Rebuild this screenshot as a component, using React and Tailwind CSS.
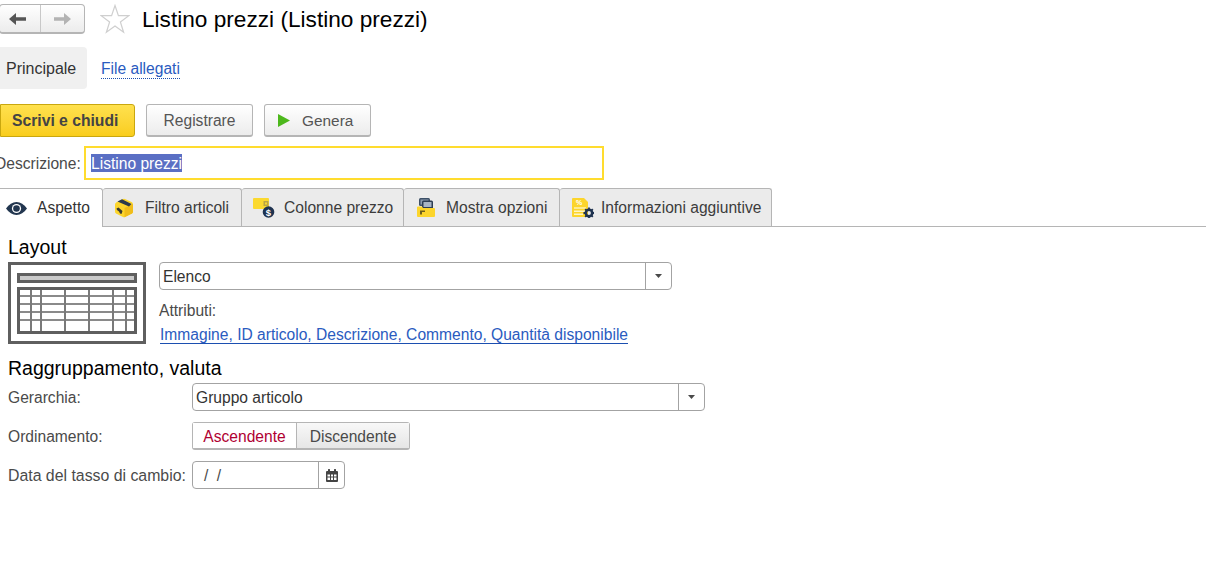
const font = { fontFamily: '"Liberation Sans", Arial, sans-serif' }

function Caret() {
  return (
    <svg width="7" height="4" viewBox="0 0 7 4">
      <path d="M0 0h7L3.500 4z" fill="#4a4a4a" />
    </svg>
  )
}

function SelectBox({ value, className }) {
  return (
    <div className={`flex h-[28px] items-stretch rounded-[4px] border border-[#a3a3a3] bg-white ${className}`}>
      <div className="flex-1 pl-[3px] text-[15.6px] leading-[28px] text-[#333333]">{value}</div>
      <div className="flex w-[26px] items-center justify-center border-l border-[#a3a3a3]">
        <Caret />
      </div>
    </div>
  )
}

function NavArrow({ color, flip }) {
  return (
    <svg width="17" height="12" viewBox="0 0 17 12" className={flip ? 'rotate-180' : ''}>
      <path d="M0 6l7-6v4.200h10v3.600H7V12z" fill={color} />
    </svg>
  )
}

function Star() {
  return (
    <svg width="30" height="30" viewBox="0 0 30 30" className="ml-[15px] shrink-0">
      <path d="M15 1.500l3.400 10.200h10.400l-8.400 6.200 3.200 10.300L15 21.900l-8.600 6.300 3.200-10.300-8.400-6.200h10.400z" fill="#ffffff" stroke="#cfcfcf" strokeWidth="1.200" />
    </svg>
  )
}

function EyeIcon() {
  return (
    <svg width="21" height="13" viewBox="0 0 21 13">
      <path d="M0 6.500C3 2.200 6.500 0 10.500 0S18 2.200 21 6.500C18 10.800 14.500 13 10.500 13S3 10.800 0 6.500z" fill="#22364f" />
      <circle cx="10.500" cy="6.500" r="4.600" fill="#ffffff" />
      <circle cx="10.500" cy="6.500" r="3.300" fill="#22364f" />
    </svg>
  )
}

function BoxIcon() {
  return (
    <svg width="20" height="20" viewBox="0 0 20 20">
      <path d="M1 6.500Q1 5 2.500 4.300L9 1q1-.5 2 0l7 3.300Q19 5 19 6.500v7q0 1.300-1 2L11 19q-1 .5-2 0l-7-3.500Q1 14.800 1 13.500z" fill="#fcd52c" />
      <path d="M10.500 10L19 6v7.500q0 1.300-1 2L11 19l-.5.200z" fill="#f0bd1a" />
      <path d="M3.500 3.500L8 1.300l9.500 4.700-2.500 2.500z" fill="#2b3a4c" />
      <path d="M2.500 10.500l2-1 4 3.500-1 3-1.500-.5-1-2-2-1.500z" fill="#3a3a30" />
    </svg>
  )
}

function PriceIcon() {
  return (
    <svg width="22" height="20" viewBox="0 0 22 20">
      <rect x="0" y="0" width="16" height="11" rx="1" fill="#fbd92f" />
      <rect x="10.500" y="3" width="5" height="5" fill="#b9a545" />
      <rect x="12" y="4.500" width="2" height="2" fill="#fbd92f" />
      <circle cx="15.500" cy="14" r="5.800" fill="#1f3350" />
      <text x="15.500" y="17.500" textAnchor="middle" fontSize="9.500" fontWeight="700" fill="#ffffff" fontFamily="Liberation Sans">$</text>
    </svg>
  )
}

function OptionsIcon() {
  return (
    <svg width="18" height="19" viewBox="0 0 18 19">
      <rect x="2" y="0" width="11" height="8" rx="1.500" fill="#3c4f66" />
      <rect x="3.500" y="1.500" width="8" height="5" fill="#8b9bb0" />
      <rect x="5" y="2.500" width="11" height="9" rx="1.500" fill="#2d3e55" />
      <rect x="6.500" y="4" width="8" height="5" fill="#a8b5c5" />
      <path d="M0 9.500q0-1 1-1h4l1 1.500h11q1 0 1 1v7q0 1-1 1H1q-1 0-1-1z" fill="#fcd52c" />
      <path d="M3 12.500h5v1.500H5v2.500H3z" fill="#6d5e1c" />
    </svg>
  )
}

function InfoIcon() {
  return (
    <svg width="22" height="20" viewBox="0 0 22 20">
      <path d="M1 0h11l4 4v15H1q-1 0-1-1V1q0-1 1-1z" fill="#fcd52c" />
      <rect x="2" y="9" width="12" height="2" fill="#fdeb90" />
      <rect x="2" y="12.500" width="12" height="1.500" fill="#fff6c4" />
      <rect x="2" y="15.500" width="9" height="1.500" fill="#fff6c4" />
      <text x="7" y="7" textAnchor="middle" fontSize="7" fontWeight="700" fill="#ffffff" fontFamily="Liberation Sans">%</text>
      <circle cx="17" cy="15" r="3.200" fill="none" stroke="#1f3350" strokeWidth="2.600" />
      <path d="M17 9.500v2M17 18.500v1.500M11.500 15h2M20.500 15h1.500M13.200 11.200l1.400 1.400M19.400 17.400l1.400 1.400M13.200 18.800l1.400-1.400M19.400 12.600l1.400-1.400" stroke="#1f3350" strokeWidth="1.800" />
    </svg>
  )
}

function LayoutIcon() {
  const cols = [22, 32, 56, 80, 104, 117]
  const rows = [33, 41, 49, 57]
  return (
    <svg width="138" height="82" viewBox="0 0 138 82" className="shrink-0">
      <rect x="1.500" y="1.500" width="135" height="79" fill="#ffffff" stroke="#5f5f5f" strokeWidth="3" />
      <rect x="10.500" y="12.500" width="117" height="7" fill="#c9c9c9" stroke="#5f5f5f" strokeWidth="3" />
      <rect x="10.500" y="26.500" width="117" height="44" fill="#ffffff" stroke="#5f5f5f" strokeWidth="3" />
      {rows.map((r) => (
        <rect key={r} x="12" y={r} width="114" height="2" fill="#8a8a8a" />
      ))}
      {cols.map((c) => (
        <rect key={c} x={c} y="28" width="2" height="41" fill="#7a7a7a" />
      ))}
    </svg>
  )
}

function CalendarIcon() {
  return (
    <svg width="12" height="13" viewBox="0 0 12 13">
      <path d="M1 2h10q1 0 1 1v9q0 1-1 1H1q-1 0-1-1V3q0-1 1-1z" fill="#444444" />
      <rect x="2" y="0" width="2" height="3" rx="0.500" fill="#444444" />
      <rect x="8" y="0" width="2" height="3" rx="0.500" fill="#444444" />
      <path d="M1.500 5.500h2.500v2H1.500zM5 5.500h2v2H5zM8 5.500h2.500v2H8zM1.500 8.500h2.500v2.500H1.500zM5 8.500h2v2.500H5zM8 8.500h2.500v2.500H8z" fill="#ffffff" />
    </svg>
  )
}

const tabs = [
  { label: 'Filtro articoli', icon: <BoxIcon />, width: 'w-[139px]', gap: 'gap-[11px]', pl: 'pl-[11px]' },
  { label: 'Colonne prezzo', icon: <PriceIcon />, width: 'w-[162px]', gap: 'gap-[9px]', pl: 'pl-[11px]' },
  { label: 'Mostra opzioni', icon: <OptionsIcon />, width: 'w-[156px]', gap: 'gap-[11px]', pl: 'pl-[13px]' },
  { label: 'Informazioni aggiuntive', icon: <InfoIcon />, width: 'w-[212px]', gap: 'gap-[7px]', pl: 'pl-[12px]' },
]

const grayButton = 'rounded-[3px] border border-b-2 border-[#b5b5b5] bg-gradient-to-b from-white to-[#ececec] text-[#555555]'

export default function App() {
  return (
    <div style={font} className="h-[579px] w-[1206px] overflow-hidden bg-white text-[15.6px] text-[#4a4a4a]">
      {/* title bar */}
      <header className="flex h-[47px] items-start pt-[4px]">
        <div className="ml-[-1px] flex h-[30px] w-[86px] rounded-[4px] border border-b-2 border-[#b5b5b5] bg-gradient-to-b from-white to-[#ececec]">
          <div className="flex w-[41px] items-center justify-center border-r border-[#c8c8c8] pr-[5px]">
            <NavArrow color="#555555" />
          </div>
          <div className="flex flex-1 items-center justify-center">
            <NavArrow color="#b3b3b3" flip />
          </div>
        </div>
        <Star />
        <h1 className="ml-[12px] text-[22.65px] leading-[30px] text-black">Listino prezzi (Listino prezzi)</h1>
      </header>

      {/* page switcher */}
      <nav className="flex h-[42px] items-center">
        <div className="flex h-full w-[87px] items-center rounded-r-[4px] bg-[#f0f0f0] pl-[6px] pt-[2px] text-[16px] text-[#333333]">Principale</div>
        <a className="ml-[14px] mt-[2px] border-b border-dotted border-[#1c4fb0] leading-[18px] text-[#2a5bc0]">File allegati</a>
      </nav>

      {/* command bar */}
      <div className="mt-[15px] flex h-[33px] items-stretch">
        <button className="w-[135px] rounded-r-[3px] border border-[#c9a70f] bg-gradient-to-b from-[#ffe14d] to-[#f9cd1b] pl-[11px] text-left text-[15.7px] font-bold text-[#444444]">Scrivi e chiudi</button>
        <button className={`ml-[11px] w-[107px] pt-[1px] ${grayButton}`}>Registrare</button>
        <button className={`ml-[11px] flex w-[107px] items-center pl-[13px] pt-[1px] ${grayButton}`}>
          <svg width="12" height="13" viewBox="0 0 12 13"><path d="M0 0l12 6.500L0 13z" fill="#4db81c" /></svg>
          <span className="ml-[12px] text-[15.4px]">Genera</span>
        </button>
      </div>

      {/* description */}
      <div className="mt-[9px] flex h-[34px] items-center">
        <label className="ml-[-5px] w-[89px] whitespace-nowrap pt-[2px]">Descrizione:</label>
        <div className="flex h-full w-[520px] items-center border-2 border-[#ffdc2e] pl-[5px]">
          <span className="h-[18px] bg-[#5a6fc4] leading-[19px] text-white">Listino prezzi</span>
        </div>
      </div>

      {/* tabs */}
      <div className="mt-[8px] flex h-[39px] border-b border-[#b5b5b5] text-[15.6px]">
        <div className="flex h-[39px] w-[103px] items-center gap-[10px] rounded-tr-[3px] border-r border-t border-[#b5b5b5] bg-white pl-[6px] text-[#333333]">
          <EyeIcon />
          <span>Aspetto</span>
        </div>
        {tabs.map((tab) => (
          <div key={tab.label} className={`flex items-center rounded-t-[3px] border-r border-t border-[#b5b5b5] bg-[#ebebeb] text-[#3c3c3c] ${tab.width} ${tab.gap} ${tab.pl}`}>
            {tab.icon}
            <span className="whitespace-nowrap">{tab.label}</span>
          </div>
        ))}
      </div>

      {/* layout section */}
      <section className="pl-[8px]">
        <h2 className="mt-[9px] text-[19.5px] leading-[22px] text-black">Layout</h2>
        <div className="mt-[4px] flex">
          <LayoutIcon />
          <div className="ml-[13px]">
            <SelectBox value="Elenco" className="w-[513px]" />
            <div className="mt-[12px] leading-[18px]">Attributi:</div>
            <a className="mt-[6px] ml-[1px] inline-block border-b border-[#1c4fb0] leading-[17px] text-[#2a5bc0]">Immagine, ID articolo, Descrizione, Commento, Quantità disponibile</a>
          </div>
        </div>

        <h2 className="mt-[11px] text-[19.5px] leading-[22px] text-black">Raggruppamento, valuta</h2>
        <div className="mt-[4px] flex items-center">
          <span className="w-[184px]">Gerarchia:</span>
          <SelectBox value="Gruppo articolo" className="w-[513px]" />
        </div>
        <div className="mt-[11px] flex items-center">
          <span className="w-[184px]">Ordinamento:</span>
          <div className="flex h-[28px] rounded-[3px] border border-b-2 border-[#b5b5b5]">
            <div className="flex w-[104px] items-center justify-center border-r border-[#b5b5b5] bg-white pt-[2px] text-[#b00032]">Ascendente</div>
            <div className="flex w-[112px] items-center justify-center bg-gradient-to-b from-[#f8f8f8] to-[#e6e6e6] pt-[2px]">Discendente</div>
          </div>
        </div>
        <div className="mt-[11px] flex items-center">
          <span className="w-[184px] whitespace-nowrap text-[15.85px]">Data del tasso di cambio:</span>
          <div className="flex h-[28px] w-[153px] rounded-[4px] border border-[#a3a3a3]">
            <div className="flex-1 pl-[11px] leading-[28px] [word-spacing:4px]">/ /</div>
            <div className="flex w-[26px] items-center justify-center border-l border-[#a3a3a3]">
              <CalendarIcon />
            </div>
          </div>
        </div>
      </section>
    </div>
  )
}
